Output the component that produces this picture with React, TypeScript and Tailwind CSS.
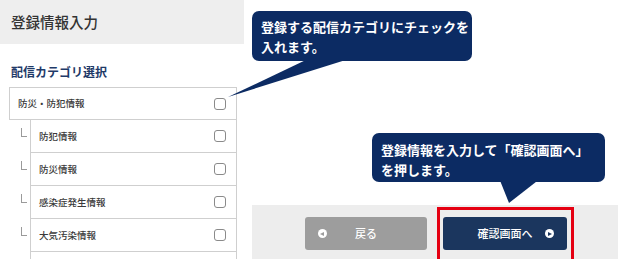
import React from "react";

const font = { fontFamily: '"Noto Sans CJK JP", "Noto Sans", sans-serif' };

function Check() {
  return <div className="w-[12px] h-[12px] rounded-[3px] border-[1.5px] border-[#8a8a8a] bg-white" />;
}

function SubRow({ label }: { label: string }) {
  return (
    <div className="flex h-[33px] shrink-0">
      <div className="relative w-[21px]">
        <div className="absolute left-[12px] top-[8px] w-[6px] h-[9px] border-l border-b border-[#9a9a9a]" />
      </div>
      <div className="flex-1 flex items-center justify-between border-l border-b border-r border-[#cfcfcf] pl-[8px] pr-[10px]">
        <span className="text-[9.5px] font-medium text-[#3a3a3a]">{label}</span>
        <Check />
      </div>
    </div>
  );
}

export default function App() {
  return (
    <div className="relative w-[621px] h-[259px] overflow-hidden bg-white flex" style={font}>
      <div className="w-[244px] flex flex-col shrink-0">
        <div className="h-[44px] shrink-0 bg-[#eeeeee] flex items-center pl-[11px] text-[14.5px] font-medium text-[#333]">
          登録情報入力
        </div>
        <div className="mt-[20px] shrink-0 pl-[11px] text-[12px] leading-[16px] font-bold text-[#1f3a68]">配信カテゴリ選択</div>
        <div className="ml-[9px] w-[228px] mt-[7px] shrink-0">
          <div className="h-[33px] flex items-center justify-between border border-[#cfcfcf] pl-[8px] pr-[10px]">
            <span className="text-[9.5px] font-medium text-[#3a3a3a]">防災・防犯情報</span>
            <Check />
          </div>
          <SubRow label="防犯情報" />
          <SubRow label="防災情報" />
          <SubRow label="感染症発生情報" />
          <SubRow label="大気汚染情報" />
          <SubRow label="" />
        </div>
      </div>
      <div className="flex-1 flex flex-col">
        <div className="flex-1" />
        <div className="ml-[8px] mr-[3px] h-[54px] shrink-0 bg-[#ededed] flex items-start pt-[12px] pl-[53px] gap-[16px]">
          <div className="relative w-[122px] h-[33px] rounded-[3px] bg-[#9d9d9d] flex items-center justify-center text-white text-[11px] font-medium">
            <div className="absolute left-[13px] top-[12px] w-[9px] h-[9px] rounded-full bg-white flex items-center justify-center">
              <div className="w-0 h-0 border-y-[2.5px] border-y-transparent border-r-[4px] border-r-[#9d9d9d] -ml-[1px]" />
            </div>
            戻る
          </div>
          <div className="relative w-[124px] h-[33px] rounded-[3px] bg-[#1b365e] flex items-center justify-center text-white text-[11px] font-medium">
            確認画面へ
            <div className="absolute right-[13px] top-[12px] w-[9px] h-[9px] rounded-full bg-white flex items-center justify-center">
              <div className="w-0 h-0 border-y-[2.5px] border-y-transparent border-l-[4px] border-l-[#1b365e] ml-[1px]" />
            </div>
          </div>
        </div>
      </div>

      {/* annotations */}
      <svg className="absolute left-0 top-0 pointer-events-none" width="621" height="259">
        <polygon points="228,97 310,58 352,58" fill="#0c2b63" />
        <polygon points="499,178 509,203 541,178" fill="#0c2b63" />
      </svg>
      <div className="absolute left-[252px] top-[11px] w-[220px] h-[50px] rounded-[7px] bg-[#0c2b63] pl-[9px] pt-[6px] text-white font-bold text-[13px] leading-[20px]">
        登録する配信カテゴリにチェックを
        <br />
        入れます。
      </div>
      <div className="absolute left-[372px] top-[133px] w-[233px] h-[49px] rounded-[7px] bg-[#0c2b63] pl-[9px] pt-[7px] text-white font-bold text-[13px] leading-[20px]">
        登録情報を入力して「確認画面へ」
        <br />
        を押します。
      </div>
      <div className="absolute left-[437px] top-[207px] w-[137px] h-[60px] border-[3px] border-[#e50012]" />
    </div>
  );
}
